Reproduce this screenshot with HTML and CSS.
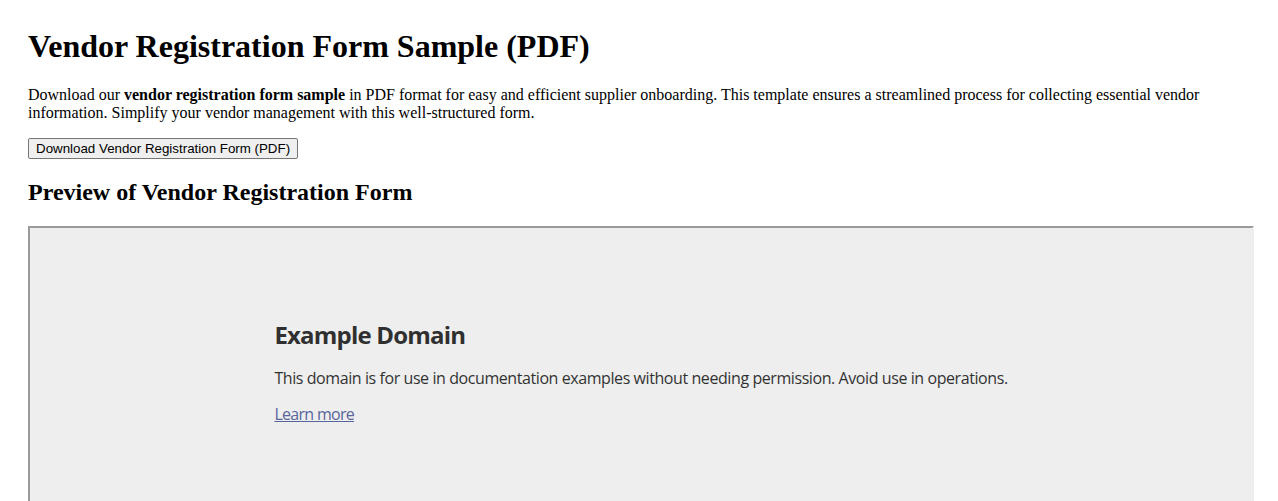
FILE: index.html
```html
<!DOCTYPE html>
<html lang="en">
<head>
<meta charset="utf-8">
<title>Vendor Registration Form Sample (PDF)</title>
<link rel="stylesheet" href="styles.css">
</head>
<body>
<h1 class="title">Vendor Registration Form Sample (PDF)</h1>
<p class="intro">Download our <strong>vendor registration form sample</strong> in PDF format for easy and efficient supplier onboarding. This template ensures a streamlined process for collecting essential vendor information. Simplify your vendor management with this well-structured form.</p>
<button class="download" type="button">Download Vendor Registration Form (PDF)</button>
<h2 class="subtitle">Preview of Vendor Registration Form</h2>
<div class="frame">
  <div class="doc">
    <h1 class="doc-title">Example Domain</h1>
    <p class="doc-text">This domain is for use in documentation examples without needing permission. Avoid use in operations.</p>
    <p class="doc-text"><a class="doc-link" href="#">Learn more</a></p>
  </div>
</div>
</body>
</html>
```

FILE: styles.css
```css
html, body {
  background: #fff;
}
body {
  margin: 8px;
  padding: 20px;
  font-family: "Liberation Serif", "Times New Roman", serif;
  font-size: 16px;
  color: #000;
  overflow: hidden;
}
.title {
  font-size: 32px;
  font-weight: bold;
  margin: 0 0 21.44px;
}
.intro {
  margin: 0 0 16px;
  line-height: normal;
}
.download {
  font-family: "Liberation Sans", Arial, sans-serif;
  font-size: 13.33px;
  color: #000;
  background: #efefef;
  border: 1px solid #767676;
  border-radius: 2px;
  padding: 1px 7px;
  height: 21px;
  margin: 0;
}
.subtitle {
  font-size: 24px;
  font-weight: bold;
  margin: 19.92px 0;
}
.frame {
  height: 600px;
  border-style: solid;
  border-width: 2px;
  border-color: #9a9a9a #eeeeee #eeeeee #9a9a9a;
  background: #eeeeee;
  margin-right: -4px;
}
.doc {
  width: 60%;
  margin: 0 auto;
  padding-top: 90px;
  opacity: 0.8;
  font-family: "Open Sans", "Noto Sans", sans-serif;
  color: #000;
}
.doc-title {
  font-size: 24px;
  font-weight: 700;
  margin: 0 0 16px;
  letter-spacing: -0.8px;
}
.doc-text {
  font-size: 16px;
  margin: 0 0 14px;
  white-space: nowrap;
  letter-spacing: -0.42px;
}
.doc-link {
  color: #334488;
  letter-spacing: -0.7px;
}
```
